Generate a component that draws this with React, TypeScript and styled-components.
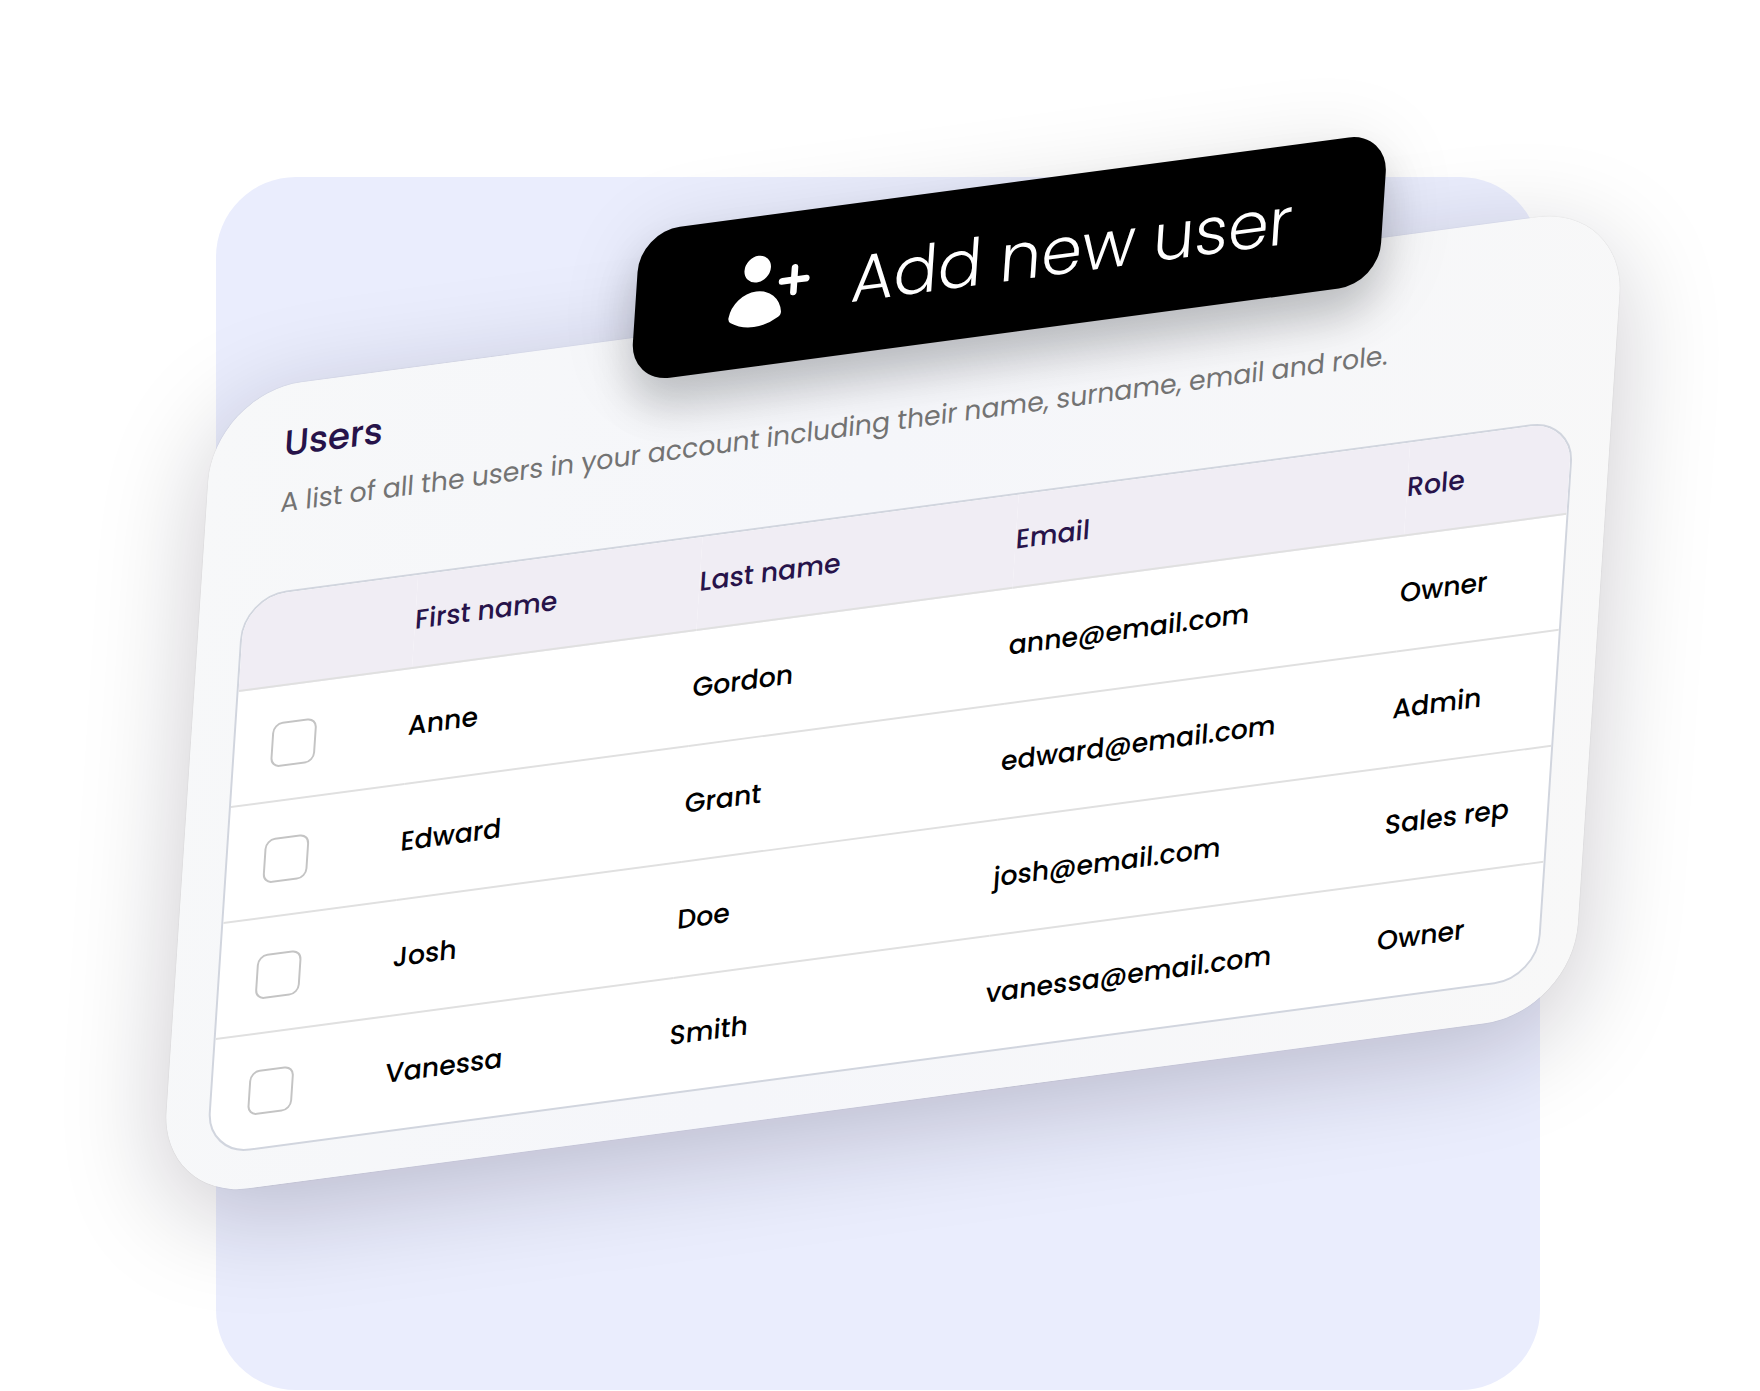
import React, { useState } from "react";
import styled, { createGlobalStyle } from "styled-components";

const GlobalStyle = createGlobalStyle`
  *, *::before, *::after { box-sizing: border-box; }
  body {
    margin: 0;
    background: #ffffff;
    font-family: Poppins, Inter, "Open Sans", sans-serif;
    overflow-x: hidden;
  }
`;

const Page = styled.main`
  padding: 177px 220px 0 216px;
`;

const Backdrop = styled.section`
  display: flow-root;
  padding-bottom: 190px;
  border-radius: 80px;
  background: #eaedfd;
`;

/* The card is tilted as one sheet, together with the button pinned to it. */
const Card = styled.article`
  position: relative;
  margin: 217px -98px 0 -2px;
  padding: 38px 37px 38px 43px;
  border-radius: 88px;
  background: linear-gradient(100deg, #f7f8f9, #f5f6fa 45%, #f8f8f8);
  box-shadow: 0 0 1px rgba(0, 0, 0, 0.25), 0 26px 104px rgba(14, 6, 30, 0.21);
  transform: matrix(0.991, -0.1323, -0.066, 1, 0, 0);
  transform-origin: 0 0;
`;

const CardHeader = styled.header`
  display: flex;
  flex-direction: column;
  gap: 16px;
  padding: 0 32px 68px;
`;

const Title = styled.h1`
  margin: 0;
  color: #27134a;
  font-size: 36px;
  font-weight: 500;
  line-height: 44px;
`;

const Subtitle = styled.p`
  margin: 0;
  color: #737373;
  font-size: 27px;
  font-weight: 400;
  line-height: 42px;
`;

const AddButton = styled.button`
  position: absolute;
  top: -106px;
  left: 423px;
  display: flex;
  align-items: center;
  gap: 38px;
  padding: 31px 92px 31px 91px;
  border: 0;
  border-radius: 40px;
  background: #000000;
  color: #ffffff;
  font-family: inherit;
  font-size: 66px;
  font-weight: 300;
  line-height: 88px;
  white-space: nowrap;
  box-shadow: 0 28px 40px rgba(0, 12, 18, 0.19), 0 4px 80px rgba(0, 0, 10, 0.1);
  cursor: pointer;
`;

const Icon = styled.svg`
  flex: none;
  width: 89px;
  height: 89px;
  fill: currentColor;
`;

const TableFrame = styled.div`
  overflow: hidden;
  border: 2px solid #d1d5de;
  border-radius: 44px;
  background: #ffffff;
`;

const Table = styled.table`
  width: 100%;
  table-layout: fixed;
  border-collapse: separate;
  border-spacing: 0;
  font-size: 27px;
  font-weight: 500;
  line-height: 36px;
  text-align: left;
`;

const Column = styled.col<{ $width?: number }>`
  width: ${({ $width }) => ($width ? `${$width}px` : "auto")};
`;

const HeadCell = styled.th`
  height: 94px;
  padding: 0 0 2px;
  border-bottom: 2px solid #e0e0e0;
  background: #f0edf4;
  color: #27134a;
  font-weight: 500;
`;

const Cell = styled.td`
  height: 116px;
  padding: 0;
  border-bottom: 2px solid #e0e0e0;
  color: #000000;
  white-space: nowrap;

  tr:last-child > & {
    height: 114px;
    border-bottom: 0;
  }
`;

const SelectCell = styled(Cell)`
  padding: 2px 0 0 37px;
`;

const Checkbox = styled.input`
  display: block;
  width: 45px;
  height: 45px;
  margin: 0;
  border: 2px solid #c4c4c4;
  border-radius: 10px;
  background: #ffffff;
  appearance: none;
  cursor: pointer;

  &:checked {
    background: #27134a;
    border-color: #27134a;
  }
`;

interface User {
  first: string;
  last: string;
  email: string;
  role: string;
}

const users: User[] = [
  { first: "Anne", last: "Gordon", email: "anne@email.com", role: "Owner" },
  { first: "Edward", last: "Grant", email: "edward@email.com", role: "Admin" },
  { first: "Josh", last: "Doe", email: "josh@email.com", role: "Sales rep" },
  { first: "Vanessa", last: "Smith", email: "vanessa@email.com", role: "Owner" },
];

function UserPlusIcon() {
  return (
    <Icon viewBox="0 0 20 20" aria-hidden="true">
      <path d="M10 5a3 3 0 1 1-6 0 3 3 0 0 1 6 0ZM1.615 16.428a1.224 1.224 0 0 1-.569-1.175 6.002 6.002 0 0 1 11.908 0c.058.467-.172.92-.57 1.174A9.953 9.953 0 0 1 7 18a9.953 9.953 0 0 1-5.385-1.572ZM16.25 5.75a.75.75 0 0 0-1.5 0v2h-2a.75.75 0 0 0 0 1.5h2v2a.75.75 0 0 0 1.5 0v-2h2a.75.75 0 0 0 0-1.5h-2v-2Z" />
    </Icon>
  );
}

export default function App() {
  const [selected, setSelected] = useState<string[]>([]);

  const toggle = (email: string) =>
    setSelected((current) =>
      current.includes(email)
        ? current.filter((item) => item !== email)
        : [...current, email]
    );

  return (
    <>
      <GlobalStyle />
      <Page>
        <Backdrop>
          <Card>
            <CardHeader>
              <Title>Users</Title>
              <Subtitle>
                A list of all the users in your account including their name,
                surname, email and role.
              </Subtitle>
            </CardHeader>
            <TableFrame>
              <Table>
                <colgroup>
                  <Column $width={175} />
                  <Column $width={287} />
                  <Column $width={319} />
                  <Column $width={395} />
                  <Column />
                </colgroup>
                <thead>
                  <tr>
                    <HeadCell as="td" />
                    <HeadCell scope="col">First name</HeadCell>
                    <HeadCell scope="col">Last name</HeadCell>
                    <HeadCell scope="col">Email</HeadCell>
                    <HeadCell scope="col">Role</HeadCell>
                  </tr>
                </thead>
                <tbody>
                  {users.map((user) => (
                    <tr key={user.email}>
                      <SelectCell>
                        <Checkbox
                          type="checkbox"
                          aria-label={`${user.first} ${user.last}`}
                          checked={selected.includes(user.email)}
                          onChange={() => toggle(user.email)}
                        />
                      </SelectCell>
                      <Cell>{user.first}</Cell>
                      <Cell>{user.last}</Cell>
                      <Cell>{user.email}</Cell>
                      <Cell>{user.role}</Cell>
                    </tr>
                  ))}
                </tbody>
              </Table>
            </TableFrame>
            <AddButton type="button">
              <UserPlusIcon />
              Add new user
            </AddButton>
          </Card>
        </Backdrop>
      </Page>
    </>
  );
}
